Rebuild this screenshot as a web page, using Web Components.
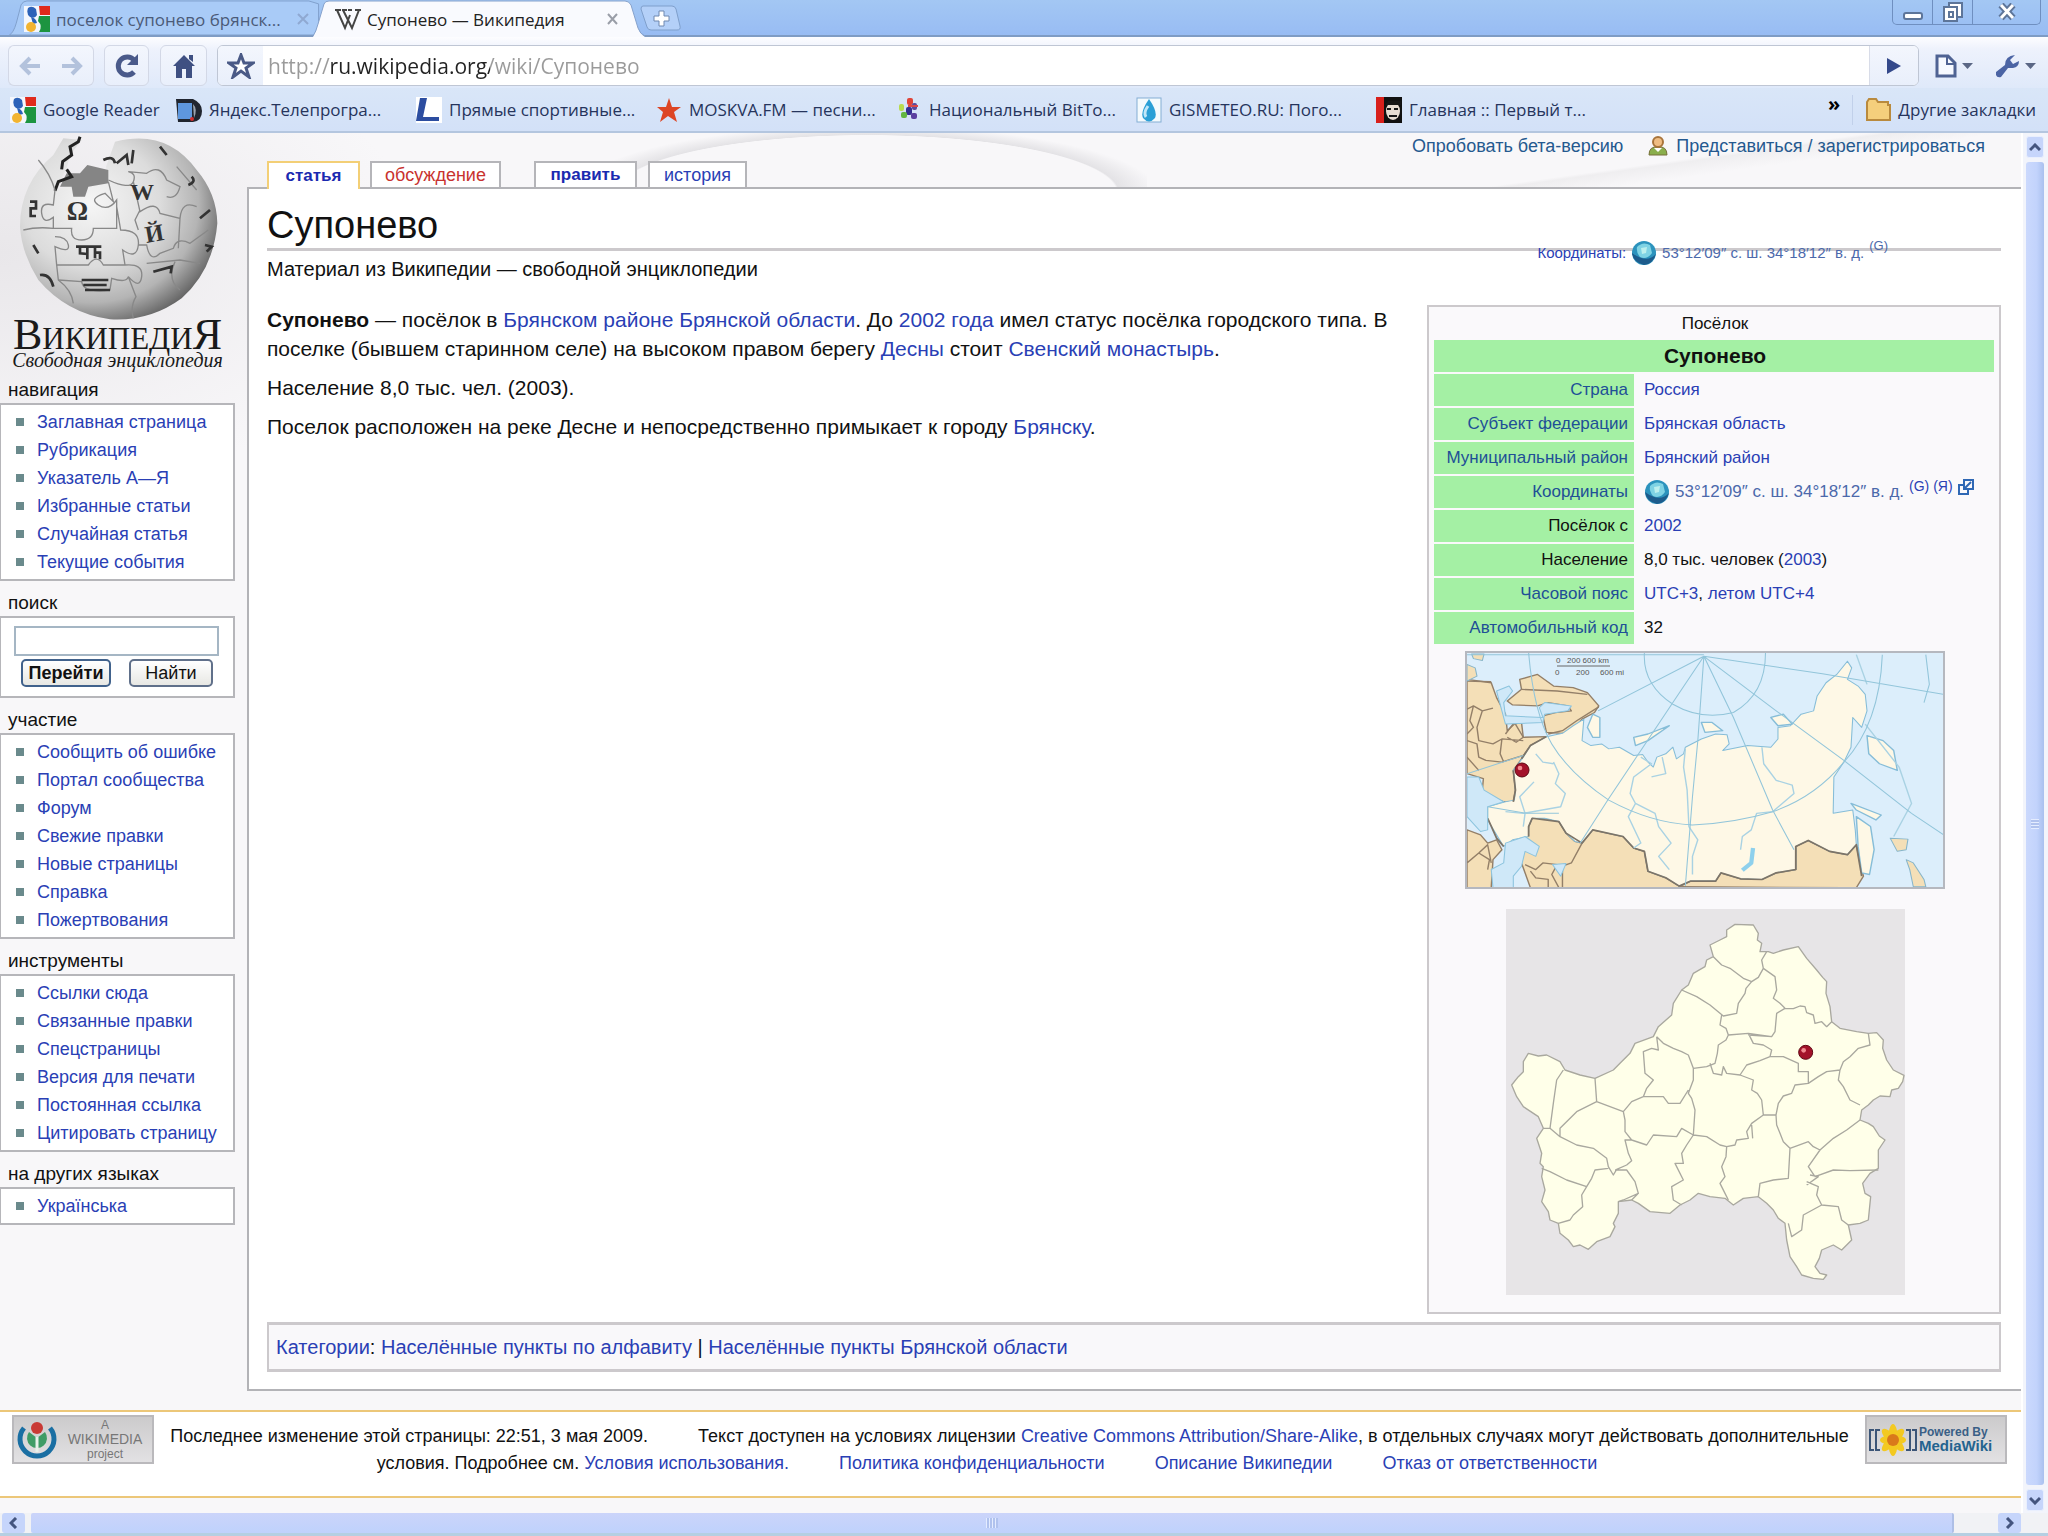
<!DOCTYPE html>
<html lang="ru">
<head>
<meta charset="utf-8">
<title>Супонево — Википедия</title>
<style>
html{background:#f8f7f9}
body{margin:0;font-family:"Liberation Sans",Arial,sans-serif;color:#111}
</style>
</head>
<body>
<browser-window>
  <tab-strip slot="chrome"></tab-strip>
  <address-bar slot="chrome"></address-bar>
  <bookmark-bar slot="chrome"></bookmark-bar>
  <wiki-page>
    <wiki-logo slot="side"></wiki-logo>
    <side-portlet slot="side" heading="навигация">
      <side-link>Заглавная страница</side-link><side-link>Рубрикация</side-link><side-link>Указатель А—Я</side-link><side-link>Избранные статьи</side-link><side-link>Случайная статья</side-link><side-link>Текущие события</side-link>
    </side-portlet>
    <wiki-search slot="side"></wiki-search>
    <side-portlet slot="side" heading="участие">
      <side-link>Сообщить об ошибке</side-link><side-link>Портал сообщества</side-link><side-link>Форум</side-link><side-link>Свежие правки</side-link><side-link>Новые страницы</side-link><side-link>Справка</side-link><side-link>Пожертвования</side-link>
    </side-portlet>
    <side-portlet slot="side" heading="инструменты">
      <side-link>Ссылки сюда</side-link><side-link>Связанные правки</side-link><side-link>Спецстраницы</side-link><side-link>Версия для печати</side-link><side-link>Постоянная ссылка</side-link><side-link>Цитировать страницу</side-link>
    </side-portlet>
    <side-portlet slot="side" heading="на других языках">
      <side-link>Українська</side-link>
    </side-portlet>
    <personal-links slot="top"></personal-links>
    <page-tabs slot="top"></page-tabs>
    <wiki-article></wiki-article>
    <wiki-footer slot="footer"></wiki-footer>
  </wiki-page>
</browser-window>

<script>
const BASE = `<style>*,:host{box-sizing:border-box}a{color:#2a3fb5;text-decoration:none}a:hover{text-decoration:underline}
button{font:inherit;color:inherit;border:0;background:none;padding:0;margin:0}svg{display:block;flex:none}:host([hidden]){display:none}</style>`;
const define = (name, html) => customElements.define(name, class extends HTMLElement {
  constructor() {
    super();
    const t = document.createElement('template');
    t.innerHTML = BASE + (typeof html === 'function' ? html(this) : html);
    this.attachShadow({mode: 'open'}).append(t.content.cloneNode(true));
  }
});

const googleIcon = `<svg width="26" height="26" viewBox="0 0 26 26"><rect width="26" height="26" fill="#f4f7fd"/><path d="M15 0H26V9H16Z" fill="#e02a1c"/><path d="M15 10H26V26H15Q19 20 14 15Z" fill="#1c9440"/><path d="M4 2Q8-1 12 3L13 9Q11 13 6 11Q2 8 4 2Z" fill="#2c62b8"/><path d="M7 11Q12 12 13 17L9 18Z" fill="#2c62b8"/><circle cx="7" cy="21" r="5" fill="#f2b431"/></svg>`;

define('browser-window', `<style>
:host{display:grid;grid-template-rows:auto 1fr auto;min-height:100vh}
header{display:block;border-bottom:2px solid #b4c6df}
.view{display:grid;grid-template-columns:1fr 27px}
</style>
<header><slot name="chrome"></slot></header>
<div class="view"><slot></slot><scroll-bar></scroll-bar></div>
<bottom-scroll></bottom-scroll>`);

define('scroll-bar', `<style>
:host{display:flex;flex-direction:column;background:#f2f4fb;padding:3px 4px 2px 3px;gap:4px;border-left:2px solid #fff}
button{height:22px;border-radius:3px;background:#c6d5fb;border:1px solid #e9effe;display:grid;place-items:center}
.thumb{flex:1;border-radius:3px;background:linear-gradient(90deg,#cbd9fd,#c2d3fc 60%,#a9c0ee);display:grid;place-items:center}
i{width:8px;height:10px;background:repeating-linear-gradient(#e4ecff 0 1px,#b0c2ee 1px 3px)}
</style><button aria-label="Вверх"><svg width="12" height="9" viewBox="0 0 12 9"><path d="M1 7L6 2L11 7" fill="none" stroke="#44557f" stroke-width="3"/></svg></button>
<div class="thumb"><i></i></div>
<button aria-label="Вниз"><svg width="12" height="9" viewBox="0 0 12 9"><path d="M1 2L6 7L11 2" fill="none" stroke="#44557f" stroke-width="3"/></svg></button>`);

define('bottom-scroll', `<style>
:host{display:flex;background:#f1f2f5;height:23px;padding:0 27px 0 2px;gap:6px;border-bottom:3px solid #b5cfe2}
button{width:23px;background:#c6d5fb;border-radius:3px;display:grid;place-items:center}
.thumb{flex:1;margin-right:38px;background:linear-gradient(#cbd4fa,#bfd2fc);border-right:2px solid #aebfe6;border-radius:2px;display:grid;place-items:center}
i{width:12px;height:10px;background:repeating-linear-gradient(90deg,#e4ecff 0 1px,#b0c2ee 1px 3px)}
</style><button aria-label="Влево"><svg width="9" height="12" viewBox="0 0 9 12"><path d="M7 1L2 6L7 11" fill="none" stroke="#44557f" stroke-width="3"/></svg></button>
<div class="thumb"><i></i></div>
<button aria-label="Вправо"><svg width="9" height="12" viewBox="0 0 9 12"><path d="M2 1L7 6L2 11" fill="none" stroke="#44557f" stroke-width="3"/></svg></button>`);

define('tab-strip', `<style>
:host{display:flex;height:37px;background:linear-gradient(#a3c7f3,#98bcf3);font-family:"Open Sans",sans-serif;font-size:17px;border-bottom:2px solid #7f9cc4}
.tab{display:grid;height:37px}
.tab>*{grid-area:1/1}
.row{display:flex;align-items:center;gap:6px;height:36px;padding:2px 0 0;white-space:nowrap}
.t1{width:312px;margin-left:5px;color:#4b5a78;height:35px}.t1 .row{padding-left:19px}
.t2{width:330px;margin-left:-4px;color:#222;z-index:1}.t2 .row{padding-left:22px}
.row button{margin-left:auto;width:18px}
.t1 button{margin-right:8px}.t2 button{margin-right:20px}
.plus{margin:5px 0 0 -3px;height:26px}
.win{display:flex;margin-left:auto;margin-right:7px;height:25px;border:1px solid #6f8fc0;border-top:0;border-radius:0 0 5px 5px}
.win button{display:grid;place-items:center;border-right:1px solid #6f8fc0;width:40px}
.win button:last-child{width:67px;border:0}
</style>
<div class="tab t1"><svg width="318" height="35" viewBox="0 0 318 36"><path d="M0 36Q4 34 7 24L12 5Q14 1 18 1H308L318 4V36Z" fill="#a9cbf7" stroke="#7f9fcb"/></svg>
<div class="row">${googleIcon}<span>поселок супонево брянск...</span><button aria-label="Закрыть вкладку"><svg width="12" height="12" viewBox="0 0 12 12"><path d="M1 1L11 11M11 1L1 11" stroke="#8fa9d2" stroke-width="2"/></svg></button></div></div>
<div class="tab t2"><svg width="332" height="37" viewBox="0 0 332 37"><path d="M0 37Q3 32 5 24L11 4Q12 1 16 1H312Q316 1 318 5L325 28Q327 34 332 37Z" fill="#f9fafe"/><path d="M0 36Q3 32 5 24L11 4Q12 1 16 1H312Q316 1 318 5L325 28Q327 34 332 36" fill="none" stroke="#86a2cc"/></svg>
<div class="row"><svg width="26" height="24" viewBox="0 0 26 24"><path d="M2 3L10 21L15 8M8 3L17 21L24 3M0 3H6M7 3H12M20 3H26M13 3H17" fill="none" stroke="#444" stroke-width="2"/></svg><span>Супонево — Википедия</span><button aria-label="Закрыть вкладку"><svg width="11" height="12" viewBox="0 0 11 12"><path d="M1 1L10 11M10 1L1 11" stroke="#9a9ea8" stroke-width="2"/></svg></button></div></div>
<button class="plus" aria-label="Новая вкладка"><svg width="42" height="26" viewBox="0 0 42 26"><path d="M3 1H32Q35 1 36 4L40 21Q41 25 37 25H11Q8 25 7 22L1 4Q1 1 3 1Z" fill="#b4d0f8" stroke="#7f9fcb"/><path d="M19 6H24V11H29V16H24V21H19V16H14V11H19Z" fill="#fff" stroke="#6e88b0"/></svg></button>
<div class="win"><button aria-label="Свернуть"><svg width="20" height="20" viewBox="0 0 20 20"><rect x="1" y="11" width="18" height="6" rx="2" fill="#fff" stroke="#5d7599" stroke-width="2"/></svg></button>
<button aria-label="Развернуть"><svg width="22" height="22" viewBox="0 0 22 22"><rect x="7" y="2" width="13" height="14" fill="#fff" stroke="#5d7599" stroke-width="2"/><rect x="2" y="6" width="13" height="14" fill="#fff" stroke="#5d7599" stroke-width="2"/><rect x="7" y="11" width="4" height="5" fill="none" stroke="#5d7599" stroke-width="2"/></svg></button>
<button aria-label="Закрыть"><svg width="18" height="18" viewBox="0 0 18 18"><path d="M3 2L15 15M15 2L3 15" stroke="#5d7599" stroke-width="7"/><path d="M3 2L15 15M15 2L3 15" stroke="#fff" stroke-width="3"/></svg></button></div>`);

define('address-bar', `<style>
:host{display:flex;align-items:flex-start;padding:8px 12px 0 8px;height:51px;background:linear-gradient(#fdfdff,#eef2fc 12px,#dfe9fa)}
button{height:41px;display:grid;place-items:center;border:1px solid #d3d8e6;border-radius:6px;background:linear-gradient(#f3f6fd,#e9effb)}
.nav{display:flex;margin-right:10px}
.nav button{width:43px;border-radius:6px 0 0 6px;border-right:0}.nav button+button{border-radius:0 6px 6px 0;border:1px solid #d3d8e6;border-left:0}
.re{width:45px;margin-right:11px}.ho{width:47px;margin-right:10px}
.box{flex:1;display:flex;border:1px solid #bfc6d4;border-radius:6px;height:41px;background:#fff;overflow:hidden}
.box button{height:39px;border:0;border-radius:0;width:45px}.box .go{width:49px;border-left:1px solid #d8dce8}
input{flex:1;min-width:0;border:0;outline:0;padding:0 5px;font:21px "Open Sans",sans-serif;background:linear-gradient(90deg,#9a9a9a 67px,#222 67px 227px,#9a9a9a 227px);-webkit-background-clip:text;background-clip:text;color:transparent}
.m{border:0;background:none;display:flex;align-items:center;gap:5px;margin-left:16px}.m+.m{margin-left:22px}
</style>
<div class="nav"><button aria-label="Назад"><svg width="22" height="20" viewBox="0 0 22 20"><path d="M21 10H3M11 2L3 10L11 18" fill="none" stroke="#b3c2dc" stroke-width="4"/></svg></button><button aria-label="Вперёд"><svg width="22" height="20" viewBox="0 0 22 20"><path d="M1 10H19M11 2L19 10L11 18" fill="none" stroke="#b3c2dc" stroke-width="4"/></svg></button></div>
<button class="re" aria-label="Обновить"><svg width="26" height="24" viewBox="0 0 26 24"><path d="M20 6A9 9 0 1 0 20 18" fill="none" stroke="#4a5a8a" stroke-width="5"/><path d="M24 0V11H13Z" fill="#4a5a8a"/></svg></button>
<button class="ho" aria-label="Домой"><svg width="24" height="24" viewBox="0 0 24 24"><path d="M12 1L23 12H20V24H14V15H10V24H4V12H1Z M17 1H21V8L17 5Z" fill="#3f5082"/></svg></button>
<div class="box"><button aria-label="Добавить в закладки"><svg width="28" height="26" viewBox="0 0 28 26"><path d="M14 2L17 10L26 10L19 15L22 24L14 18L6 24L9 15L2 10L11 10Z" fill="#fff" stroke="#4a5a86" stroke-width="3"/></svg></button><input aria-label="Адрес" value="http://ru.wikipedia.org/wiki/Супонево"><button class="go" aria-label="Перейти"><svg width="16" height="16" viewBox="0 0 16 16"><path d="M1 0L15 8L1 16Z" fill="#34498a"/></svg></button></div>
<button class="m" aria-label="Страница"><svg width="22" height="24" viewBox="0 0 22 24"><path d="M2 2H13L20 9V22H2Z" fill="#f6f9ff" stroke="#4f6393" stroke-width="3"/><path d="M12 2V10H20" fill="none" stroke="#4f6393" stroke-width="2"/></svg><svg width="11" height="6" viewBox="0 0 11 6"><path d="M0 0H11L5.500 6Z" fill="#5b6785"/></svg></button>
<button class="m" aria-label="Настройки"><svg width="25" height="24" viewBox="0 0 25 24"><path d="M20 1L15 6L18 10L24 7Q24 13 18 14L13 14L6 23Q2 24 1 21L1 18L10 11Q10 2 20 1Z" fill="#4b64a4"/></svg><svg width="11" height="6" viewBox="0 0 11 6"><path d="M0 0H11L5.500 6Z" fill="#5b6785"/></svg></button>`);

define('book-mark', `<style>
:host{display:block;flex:0 1 240px;min-width:0}:host(.first){flex-basis:166px}:host(.last){flex:none}
a{display:flex;align-items:center;gap:7px;color:#26345c;white-space:nowrap}
</style><a href="#"><slot name="icon"></slot><span><slot></slot></span></a>`);

define('bookmark-bar', `<style>
:host{display:flex;align-items:center;height:43px;padding:0 12px 0 10px;background:linear-gradient(#d9e6f8,#d3e1f8);font-family:"Open Sans",sans-serif;font-size:17px}
.more{margin:0 12px 12px auto;font-weight:700;font-size:20px;line-height:20px;color:#000}
.sep{width:1px;height:30px;background:#c1d0ea;margin-right:12px}
svg{width:26px;height:26px}
</style>
<book-mark class="first"><span slot="icon">${googleIcon}</span>Google Reader</book-mark>
<book-mark><svg slot="icon" viewBox="0 0 26 26"><path d="M0 2H17Q26 6 26 14Q26 24 17 25H2Z" fill="#20252f"/><rect x="2" y="6" width="14" height="16" fill="#5e97de"/><path d="M17 7Q22 12 18 21Z" fill="#9aa4b0"/><circle cx="16" cy="22" r="2" fill="#d03030"/></svg>Яндекс.Телепрогра...</book-mark>
<book-mark><svg slot="icon" viewBox="0 0 26 26"><rect width="26" height="26" fill="#fff"/><path d="M4 1H11L7 20H23V24H0Z" fill="#2c4da0"/></svg>Прямые спортивные...</book-mark>
<book-mark><svg slot="icon" viewBox="0 0 26 26"><path d="M13 1L16 10H25L18 15L21 25L12 19L4 25L7 15L1 10H10Z" fill="#dd4524"/></svg>MOSKVA.FM — песни...</book-mark>
<book-mark><svg slot="icon" viewBox="0 0 26 26"><rect x="11" y="1" width="6" height="7" rx="2" fill="#e04438"/><rect x="3" y="7" width="5" height="7" rx="2" fill="#b8db4e"/><rect x="16" y="6" width="5" height="7" rx="2" fill="#5a4a9c"/><rect x="10" y="10" width="6" height="8" rx="2" fill="#353091"/><rect x="5" y="15" width="6" height="6" rx="2" fill="#63b741"/><rect x="15" y="16" width="6" height="6" rx="2" fill="#5b3fa0"/><path d="M12 9H22" stroke="#d8474a" stroke-width="2"/></svg>Национальный BitTo...</book-mark>
<book-mark><svg slot="icon" viewBox="0 0 26 26"><rect x="1" y="1" width="24" height="24" fill="#f4fafd" stroke="#84aed3"/><path d="M13 2Q22 15 19 21Q13 28 7 21Q4 15 13 2Z" fill="#2a9fd6"/><path d="M12 9Q7 16 10 20" fill="none" stroke="#bfe6f8" stroke-width="3"/></svg>GISMETEO.RU: Пого...</book-mark>
<book-mark><svg slot="icon" viewBox="0 0 26 26"><rect width="26" height="26" fill="#111"/><rect width="8" height="26" fill="#d8201c"/><ellipse cx="17" cy="14" rx="7" ry="9" fill="#e6dcd2"/><path d="M9 8H25V4H12ZM11 11H15V13H11ZM18 11H22V13H18ZM13 18H21V20H13Z" fill="#161616"/></svg>Главная :: Первый т...</book-mark>
<button class="more" aria-label="Другие закладки панели">»</button><i class="sep"></i>
<book-mark class="last"><svg slot="icon" viewBox="0 0 26 26"><path d="M2 5L4 2H11L13 5H23V8H25V23H2Z" fill="#f5cf7c" stroke="#b98a3e" stroke-width="2"/></svg>Другие закладки</book-mark>`);

define('wiki-page', `<style>
:host{display:grid;grid-template-columns:247px minmax(0,1fr);grid-template-rows:1fr auto;align-content:start;background:radial-gradient(ellipse 420px 240px at 0 120px,#e9e7ea,transparent),#f8f7f9}
.main{background:radial-gradient(ellipse 260px 60px at 620px 60px,transparent 96%,#e4e3e6 97%,transparent 112%) 0 0/900px 56px no-repeat,linear-gradient(172deg,transparent 50%,#efeef0 52%,transparent 62%) 100% 0/700px 56px no-repeat}
footer{grid-column:1/3}
</style><nav><slot name="side"></slot></nav><main class="main"><slot name="top"></slot><slot></slot></main><footer><slot name="footer"></slot></footer>`);

define('wiki-logo', `<style>
:host{display:flex;flex-direction:column;align-items:center;width:235px;height:235px;padding-top:2px;font-family:"Liberation Serif",serif;color:#1a1a1a}
svg{width:205px;height:185px}.n{font-size:44px;line-height:30px;font-variant:small-caps}.s{font-style:italic;font-size:20px;line-height:20px;white-space:nowrap}
text{font-family:"Liberation Serif",serif;font-weight:700;fill:#333}
</style>
<svg viewBox="45 15 615 555"><defs><radialGradient id="g" cx=".36" cy=".36" r=".7"><stop offset="0" stop-color="#f6f6f6"/><stop offset=".5" stop-color="#dcdcdc"/><stop offset=".78" stop-color="#b4b4b4"/><stop offset="1" stop-color="#626262"/></radialGradient></defs>
<path d="M60 290Q60 160 160 75L190 25L245 30L210 75L200 115L165 180L215 165L220 195L262 190L265 172L325 155L318 110L345 35Q500 -5 590 120Q650 190 652 280Q640 420 545 505Q450 575 330 568Q200 550 115 450Q65 370 60 290Z" fill="url(#g)"/>
<path d="M200 130H240L262 105L325 120V160L265 170L255 200H220L215 170H180Z" fill="#858585"/>
<path d="M240 20L235 35L210 50L215 75L188 95L185 118M200 118L215 140L175 155L165 182" fill="none" stroke="#222" stroke-width="9"/>
<path d="M310 90Q340 75 345 100M350 100L380 75L385 105M400 60L395 100M480 50L500 75" fill="none" stroke="#333" stroke-width="8"/>
<g fill="none" stroke="#888" stroke-width="4"><path d="M115 90Q150 130 165 180L160 225Q120 215 125 250T160 262V295Q110 290 70 300M160 295H215Q210 330 245 330T280 295H350V210Q325 245 295 225T315 190L340 215L325 155M350 230L362 300Q420 300 415 345T368 360L375 405H310Q290 370 265 405H170L165 350Q210 370 205 345T165 320M375 405Q430 400 425 440T385 440L408 500Q390 530 400 565M170 405L175 450Q215 480 220 520M325 150Q390 180 400 155T385 125L440 130Q480 100 500 150L540 170Q530 210 500 200M400 155L420 245Q470 210 480 250L540 265Q545 210 590 230M415 300L405 270L420 240M415 345H440Q450 400 480 370L520 355Q530 320 570 340L625 300M440 400L540 390L600 400M540 265L535 355M525 395Q500 450 540 480M530 110L590 180"/><path d="M175 450L245 455Q250 490 330 480L335 445Q380 460 385 440"/></g>
<text x="200" y="270" font-size="80">Ω</text><text x="390" y="210" font-size="72">W</text><text x="435" y="335" font-size="72" transform="rotate(-10 460 310)">Й</text>
<g fill="none" stroke="#333" stroke-width="8"><path d="M228 350H304M240 350V370L262 372M262 350V388M285 350V385M285 368H300V388"/><path d="M245 450H325M250 465H320M255 480H330M460 425L515 410L512 430M575 140Q590 155 565 165M90 215H108V235H92V258H108M100 345L115 370M120 435Q150 430 160 470M630 240L600 265M615 345L635 350L620 365"/></g></svg>
<span class="n">ВикипедиЯ</span><span class="s">Свободная энциклопедия</span>`);

const portletCss = `:host{display:block;width:235px}h2,label.h{display:block;margin:0;padding:9px 0 0 8px;font-size:19px;font-weight:400;line-height:26px;color:#111}
.b{border:2px solid #b6b6ba;border-left-width:1px;background:#fff;padding:3px 0}`;
define('side-portlet', el => `<style>${portletCss}</style><h2>${el.getAttribute('heading')}</h2><div class="b" role="list"><slot></slot></div>`);
define('side-link', `<style>:host{display:flex;align-items:center;gap:13px;padding-left:15px;height:28px;font-size:18px;line-height:28px;white-space:nowrap}
:host::before{content:"";width:8px;height:8px;background:#6a8a8c;flex:none}</style><a href="#"><slot></slot></a>`);
define('wiki-search', `<style>${portletCss}
.b{height:82px;padding:8px 14px 0 13px}
input{display:block;width:205px;height:30px;border:2px solid #a5b6c4;background:#fff;margin-bottom:3px}
div div{display:flex;gap:18px;padding-left:7px}
button{height:28px;width:90px;border:2px solid #60708a;border-radius:5px;background:linear-gradient(#fff,#e8e8e4);font-size:18px;line-height:24px}
button:first-child{font-weight:700;border-color:#41628c}button+button{width:84px}
</style><label class="h" for="q">поиск</label><div class="b"><input id="q" type="text"><div><button>Перейти</button><button>Найти</button></div></div>`);

define('personal-links', `<style>:host{display:flex;justify-content:flex-end;align-items:center;height:28px;padding:0 36px 2px 0;font-size:18px;gap:8px}
a{color:#25598f}a:first-of-type{margin-right:17px}</style>
<a href="#">Опробовать бета-версию</a><svg width="20" height="20" viewBox="0 0 20 20"><path d="M1 19Q1 10 10 11Q19 10 19 19Z" fill="#8aae4c" stroke="#77703a"/><path d="M6 12L10 16L14 12Z" fill="#fff"/><circle cx="10" cy="6" r="5" fill="#f0bd83" stroke="#a9743b" stroke-width="2"/></svg><a href="#">Представиться / зарегистрироваться</a>`);

define('page-tabs', `<style>:host{display:flex;height:26px;padding-left:20px;font-size:18px}
a{border:2px solid #b5b5b9;border-bottom:0;background:#fff;display:grid;place-items:center;height:26px;line-height:20px;width:131px;margin-right:11px}
a.on,a.ed{font-size:17px;font-weight:700;color:#1a2ab0}
a.on{width:93px;border-color:#f3cf76;height:28px;z-index:1;margin-right:10px}a.red{color:#c8322e}a.ed{width:103px;margin-left:22px}a.hi{width:99px}
</style><a class="on" href="#">статья</a><a class="red" href="#">обсуждение</a><a class="ed" href="#">править</a><a class="hi" href="#">история</a>`);

const globe = s => `<svg width="${s}" height="${s}" viewBox="0 0 26 26"><circle cx="13" cy="13" r="12" fill="#2c93bd"/><path d="M1 13Q2 22 13 25Q22 24 25 14Q16 24 1 13Z" fill="#1d5c8c"/><path d="M6 7Q12 1 19 5L21 13Q16 20 9 17Q5 12 6 7Z" fill="#7fd3e4"/><path d="M10 8L16 7L15 13L11 14Z" fill="#bdf0ee"/></svg>`;

define('geo-line', `<style>:host{position:absolute;right:133px;top:51px;display:flex;align-items:center;gap:5px;font-size:15px;line-height:26px;white-space:nowrap}
sup{font-size:13px;line-height:12px;align-self:flex-start}.c{color:#4c69ab}</style><a href="#">Координаты:</a>${globe(26)}<a class="c" href="#">53°12′09″ с. ш. 34°18′12″ в. д.</a><sup><a class="c" href="#">(G)</a></sup>`);

define('wiki-article', `<style>
:host{display:block;position:relative;background:#fff;border:2px solid #b3b3b7;border-right:0;padding:0 20px 17px 18px}
h1{font-size:38px;font-weight:400;line-height:46px;margin:0;padding-top:13px;border-bottom:3px solid #ccc9cc}
.sub{font-size:20px;line-height:26px;margin:5px 0 23px}
.cols{display:flex;gap:30px;align-items:flex-start;margin-bottom:8px}
.text{flex:1;min-width:0;font-size:21px;line-height:29px}p{margin:0 0 10px}
.cats{border:2px solid #ccc9cc;border-width:3px 2px;background:#f9f8fa;height:50px;line-height:44px;padding-left:7px;font-size:20px}
</style>
<h1>Супонево</h1><geo-line></geo-line>
<div class="sub">Материал из Википедии — свободной энциклопедии</div>
<div class="cols"><div class="text">
<p><b>Супонево</b> — посёлок в <a href="#">Брянском районе</a> <a href="#">Брянской области</a>. До <a href="#">2002 года</a> имел статус посёлка городского типа. В <span>поселке (бывшем старинном селе) на высоком правом берегу </span><a href="#">Десны</a> стоит <a href="#">Свенский монастырь</a>.</p>
<p>Население 8,0 тыс. чел. (2003).</p>
<p>Поселок расположен на реке Десне и непосредственно примыкает к городу <a href="#">Брянску</a>.</p></div>
<info-box></info-box></div>
<div class="cats"><a href="#">Категории</a>: <a href="#">Населённые пункты по алфавиту</a> | <a href="#">Населённые пункты Брянской области</a></div>`);

define('info-box', `<style>
:host{display:block;flex:none;width:574px;border:2px solid #ccc9cc;background:#faf9fb;padding:1px 3px 17px;font-size:17px}
table{width:100%;border-spacing:2px;table-layout:fixed}td,th{padding:0 6px 0 8px;height:32px;font-weight:400;text-align:left;white-space:nowrap}
th.k{height:28px;text-align:center}th.t{background:#a4f0a4;font-weight:700;font-size:21px;line-height:24px;text-align:center}
tbody th{background:#a4f0a4;text-align:right;width:200px}tbody th a{color:#204f96}
.geo{display:flex;align-items:center;gap:5px}sup{font-size:14px;line-height:14px;align-self:flex-start}.c{color:#4c69ab}
.geo svg:last-child{align-self:flex-start}
.maps{padding-right:18px}
russia-map{margin:5px auto 0}oblast-map{margin:20px auto 0}
</style>
<table><colgroup><col style="width:200px"><col></colgroup><thead><tr><th class="k" colspan="2">Посёлок</th></tr><tr><th class="t" colspan="2">Супонево</th></tr></thead><tbody>
<tr><th><a href="#">Страна</a></th><td><a href="#">Россия</a></td></tr>
<tr><th><a href="#">Субъект федерации</a></th><td><a href="#">Брянская область</a></td></tr>
<tr><th><a href="#">Муниципальный район</a></th><td><a href="#">Брянский район</a></td></tr>
<tr><th><a href="#">Координаты</a></th><td><div class="geo">${globe(26)}<a class="c" href="#">53°12′09″ с. ш. 34°18′12″ в. д.</a><sup><a href="#">(G)</a> <a href="#">(Я)</a></sup><svg width="16" height="16" viewBox="0 0 16 16"><path d="M6 1H15V10H6ZM5 6H1V15H10V11M13 3L7 9" fill="none" stroke="#2f68b4" stroke-width="2"/></svg></div></td></tr>
<tr><th>Посёлок с</th><td><a href="#">2002</a></td></tr>
<tr><th>Население</th><td>8,0 тыс. человек (<a href="#">2003</a>)</td></tr>
<tr><th><a href="#">Часовой пояс</a></th><td><a href="#">UTC+3</a>, <a href="#">летом UTC+4</a></td></tr>
<tr><th><a href="#">Автомобильный код</a></th><td>32</td></tr></tbody></table>
<div class="maps"><russia-map></russia-map><oblast-map></oblast-map></div>`);

const pin = (x, y, r) => `<circle cx="${x}" cy="${y}" r="${r}" fill="#a3122a" stroke="#5f0714" stroke-width="1"/><circle cx="${x - 2}" cy="${y - 2}" r="${r / 3}" fill="#f08a90"/>`;

define('russia-map', `<style>:host{display:block;width:480px;border:2px solid #b5b8bf}svg{width:100%;height:auto}</style>
<svg viewBox="0 0 476 234" role="img" aria-label="Карта России"><rect width="476" height="234" fill="#dceefb"/>
<g transform="scale(.3562 .3306) translate(-132 -65)" stroke-linejoin="round">
<g fill="#f4dfb7" stroke="#937f68" stroke-width="4">
<path d="M132 145L200 155L215 200L240 250L245 300L265 280L285 275L290 320L355 318L310 345L285 385L262 420L268 480L262 515L235 515L200 500L175 480L178 445L132 430Z"/>
<path d="M245 210L285 175L280 145L330 130L375 165L430 170L470 185L502 225L490 245L455 265L430 295L400 308L355 305L345 255L380 245L425 240L415 225L360 215L330 225L260 222Z"/>
<path d="M132 150L200 152M132 235L150 225L175 240L205 232M175 240L160 290L165 330L205 340L230 325L290 330M132 330L160 340L165 380L185 390L230 395L245 390L290 375M230 325L225 370L235 395M132 380L165 420M150 225L140 270L150 290L132 310M240 310L265 275L290 320L270 335L245 320M285 175L385 180L470 190M360 310L400 300L440 270L502 228" fill="none"/>
<path d="M132 600L170 615L190 640L215 630L230 660L205 690L200 775H132ZM132 700L165 670L195 690L190 720M165 670L190 645L200 700"/>
<path d="M305 590L315 565L350 565L390 575L410 610L435 635L455 640L485 600L570 620L600 655L630 665L640 725L690 745L728 770V775H310L285 700L295 640Z"/>
<path d="M455 640L425 700L400 710L400 775M295 705L325 720L345 700L385 705L370 735L390 775M310 725L325 745L360 750V775" fill="none"/>
<path d="M728 772L760 755L830 755L845 730L900 748L960 750L1000 730L1055 720L1055 650L1090 632L1150 665L1200 675L1225 645L1235 700L1245 740L1225 775Z"/>
</g>
<g fill="#f4dfb7" stroke="#87b5c9" stroke-width="3"><path d="M1320 625L1370 628L1365 660L1340 665ZM1365 690L1385 700L1415 750L1420 772L1385 772L1375 720ZM132 100L155 110L160 135L132 150ZM145 68L180 68L175 88L150 82Z"/></g>
<path d="M355 318L400 308L430 285L460 265L455 330L480 345L510 340L530 355L560 350L600 375L625 372L640 395L655 410L665 380L690 370L710 350L720 385L740 370L745 350L790 325L830 310L862 312L868 340L850 360L920 345L985 350L1005 325L1005 290L1040 285L1070 250L1105 240L1115 195L1140 155L1170 130L1200 90L1212 110L1200 145L1230 165L1250 190L1255 240L1240 290L1215 260L1210 350L1190 395L1162 440L1160 550L1215 540L1222 600L1225 645L1200 675L1150 665L1090 632L1055 650L1055 720L1000 730L960 750L900 748L845 730L830 755L760 755L728 770L690 745L640 725L630 665L600 655L570 620L485 600L455 640L435 635L410 610L390 575L350 565L315 565L305 590L305 620L260 630L235 650L190 570L190 530L240 515L265 510L268 480L262 420L290 380L310 345Z" fill="#fef8e6" stroke="#86bdd8" stroke-width="3"/>
<g fill="#fef8e6" stroke="#86bdd8" stroke-width="4"><path d="M1255 315L1300 330L1330 360L1340 420L1290 400L1260 370ZM1225 560L1265 590L1275 660L1262 735L1240 730L1230 650ZM485 250L505 260L505 320L485 320L470 290ZM600 320L640 310L700 285L640 330L605 345ZM790 275L820 275L850 300L800 305ZM985 260L1020 250L1045 280L1005 285ZM1210 520L1295 555L1280 570L1225 540Z"/></g>
<path d="M190 565L215 625L235 650M355 318L310 345L285 385M262 420L268 480L262 515M305 620L305 590L315 565L390 575L410 610L455 640L485 600L570 620L600 655L630 665L640 725L690 745L728 770L760 755L830 755L845 730L900 748L960 750L1000 730L1055 720L1055 650L1090 632L1150 665L1200 675L1225 645L1240 740" fill="none" stroke="#7d7467" stroke-width="5"/>
<path d="M132 440L165 440L180 480L235 515L190 530L190 600L170 605L132 560ZM240 640L295 620L335 650L325 680L295 665L285 710L262 740V775H205L200 720L235 700ZM372 705L410 702L395 740ZM240 255L345 260L335 230L350 215L425 225L415 240L350 250L345 275L240 280L215 180L250 165L260 180L235 215Z" fill="#cfe8f8" stroke="#8cc4de" stroke-width="3"/>
<g fill="none" stroke="#a9d2e3" stroke-width="4"><path d="M375 395L390 430L380 460L408 490L395 530L290 550L240 545M290 590L295 550L280 500L320 455M325 370L345 395L375 400M620 380L650 400L600 440L590 490L605 520L585 560L620 640L600 655M605 520L660 550L670 590L705 640L670 680L700 720M745 355L740 410L750 480L755 590L780 630L765 680V735M960 350L965 400L1000 450L1045 465L1050 490L990 545L945 550L930 600L905 620L900 660M650 440L690 430L680 380M1225 70L1255 160M1250 280L1345 410L1380 520L1330 620"/><path d="M935 655L930 700L905 722" stroke="#8ed0ec" stroke-width="12"/></g>
<g fill="none" stroke="#92c5da" stroke-width="3"><path d="M132 70H797M797 75L500 240M797 75L710 215L530 505L450 640M797 75L780 330L765 500L745 770M797 75L880 260L990 540L1050 660M797 75L1000 240L1190 390L1380 550L1470 615M797 75L1130 128L1470 190M630 65Q625 160 710 220Q790 270 880 245Q970 190 970 65M305 65Q320 250 370 340Q420 430 530 510Q650 580 765 585Q880 580 990 545Q1110 500 1190 395Q1290 280 1298 70M1420 70L1430 160L1415 215M132 430L290 375M190 530L300 550H390"/></g></g>
<path d="M90 13H143" stroke="#666"/>
<g font-family="Liberation Sans" font-size="8" fill="#555"><text x="89" y="10">0</text><text x="100" y="10">200 600 km</text><text x="88" y="22">0</text><text x="109" y="22">200</text><text x="133" y="22">600 mi</text></g>
${pin(55, 117, 7)}</svg>`);

define('oblast-map', `<style>:host{display:block;width:399px}svg{width:100%;height:auto}</style>
<svg viewBox="78 57 1197 1158" role="img" aria-label="Карта Брянской области"><rect x="78" y="57" width="1197" height="1158" fill="#e7e5e7"/>
<g fill="#ffffe9" stroke="#a9a89f" stroke-width="4" stroke-linejoin="round">
<path d="M740 120L765 103L820 105L835 130L832 150L845 160L840 185L865 185L880 190L910 180L955 170L980 205L1010 240L1028 262L1040 275L1038 310L1050 350L1055 395L1080 415L1130 425L1165 430L1190 428L1210 450L1208 475L1220 510L1240 540L1272 556L1268 575L1255 595L1235 600L1230 620L1200 618L1180 630L1165 645L1145 660L1140 690L1165 700L1180 710L1198 738L1215 750L1195 780L1195 835L1170 850L1148 880L1155 910L1172 920L1165 990L1140 1000L1105 1005L1115 1050L1085 1080L1060 1065L1025 1080L1018 1105L1005 1130L1020 1150L1040 1155L1030 1168L1000 1165L965 1155L950 1130L930 1100L920 1050L915 1000L895 985L880 960L860 940L835 920L790 925L760 945L735 925L690 920L655 910L630 930L600 945L570 970L510 965L475 940L455 930L415 935L415 970L400 1000L405 1010L390 1040L350 1055L325 1078L300 1065L280 1070L265 1050L240 1030L235 1000L210 990L205 965L185 935L195 900L185 860L190 830L180 820L185 790L170 745L190 715L175 680L130 650L110 620L95 585L115 560L130 545L130 515L145 490L175 498L200 495L240 515L255 540L300 555L345 565L400 540L420 520L450 490L465 460L520 440L535 410L575 375L580 340L605 300L625 285L640 250L675 230L680 210L700 200L690 165L720 150L740 140Z"/>
<g fill="none"><path d="M700 200L725 225L750 235L790 265L815 275L835 262L850 235L845 210L860 185M815 275L798 295L795 310L775 340L770 370L730 378L690 345L650 320L605 300M850 235L885 260L890 300L880 325L900 340L915 355L940 356L960 348L975 350L980 368L1000 375L1005 400L1025 395L1040 410L1055 395M915 355L890 370L885 425L875 440L805 430L745 435L738 415L720 405L725 375M745 435L738 450L715 465L712 490L705 520L680 530L640 535L625 495L605 485L580 475L550 460L530 440M805 430L820 460L850 465L875 480L870 500L840 512L800 525L780 555L740 550L730 530L725 555L700 550L690 520M875 440L805 435M870 500L910 500L955 520L955 545L985 545V580L945 585L935 610L910 618L895 640L888 675L850 675L845 630L832 610L815 600L820 570L780 555M985 580L1015 560L1040 545L1080 540L1090 515L1110 500L1135 475L1170 465L1165 430M1080 540L1075 570L1090 590L1110 630L1140 645M1140 690L1100 720L1060 745L1020 780L1000 770L985 755L930 775L910 755L900 730L890 705L888 675M850 675L815 700L800 725L805 745L770 750L765 765L740 770L720 765L680 740L640 735L645 660L635 625L625 610L640 570L640 535M815 705L818 745M640 735L605 715L590 740L520 735L500 765L455 750L435 725L435 690L430 665L455 635L490 620L500 595L520 570L495 550L490 485L515 475L535 480L530 440M490 620L550 620L565 640L600 640L625 600M345 565L350 635L430 665M350 635L290 665L240 715L240 740L210 715L190 715M210 715L220 640L230 570L250 540M240 740L290 765L340 775L380 805L385 830L400 855L410 838L440 825L455 812L445 790L435 750L455 750M385 835L345 840L335 865L320 890L260 870L210 845L185 835M320 890L305 915L308 950L280 975L270 990L235 1000M405 840L440 840L465 875L475 910L430 930L415 935M475 910L455 930M640 735L620 765L605 790L610 820L585 820L610 870L575 890L580 930L605 945M740 770L738 800L725 830L735 860L720 880L735 910L745 930M930 775L925 865L880 870L840 880L835 920M1020 780L985 830L1005 860L1060 840L1110 842L1195 840M980 885L1015 860L990 855M980 875L1015 890L1010 915L1025 945L970 975L965 1020L935 1040L925 1000M1025 945L1075 950L1085 990L1105 1005"/></g></g>
<g transform="translate(977 487) scale(3)">${pin(0, 0, 7)}</g></svg>`);

define('wiki-footer', `<style>
:host{display:flex;justify-content:space-between;align-items:flex-start;margin:19px 0 15px;border-top:2px solid #ecc779;border-bottom:2px solid #ecc779;background:#fff;height:88px;padding:3px 14px 0 12px}
ul{flex:1;list-style:none;margin:8px 6px 0;padding:0;text-align:center;font-size:18px;line-height:27px}li{display:inline;margin-right:45px}
.bd{display:flex;align-items:center;width:142px;height:49px;background:linear-gradient(#cccbcc,#e2e1e3);border:2px solid #bab9bc;color:#777}
.bd span{flex:1;text-align:center;font-size:12px;line-height:14px;white-space:nowrap}
.bd .w{font-size:14px}.mw{color:#3a5f86;font-weight:700}.bd.mw span{text-align:left}.mw b{font-size:15px;color:#24638f}
</style>
<a class="bd" href="#"><svg width="44" height="44" viewBox="0 0 44 44"><path d="M10 10A17 17 0 1 0 36 10" fill="none" stroke="#1a6fa3" stroke-width="5"/><path d="M15 14A10 10 0 1 0 31 14L23 20Z" fill="#3f9c66"/><path d="M23 19V34" stroke="#e6f1ea" stroke-width="3"/><circle cx="23" cy="10" r="6" fill="#c93a35"/></svg><span>A<br><span class="w">WIKIMEDIA</span><br>project</span></a>
<ul><li>Последнее изменение этой страницы: 22:51, 3 мая 2009.</li> <li>Текст доступен на условиях лицензии <a href="#">Creative Commons Attribution/Share-Alike</a>, в отдельных случаях могут действовать дополнительные <span>условия. Подробнее см. </span><a href="#">Условия использования.</a></li> <li><a href="#">Политика конфиденциальности</a></li> <li><a href="#">Описание Википедии</a></li> <li><a href="#">Отказ от ответственности</a></li></ul>
<a class="bd mw" href="#"><svg width="52" height="40" viewBox="0 0 52 40"><path d="M7 10H3V30H7M13 10H9V30H13M39 10H43V30H39M45 10H49V30H45" fill="none" stroke="#3c5577" stroke-width="2"/><g fill="#f3c921"><ellipse cx="26" cy="20" rx="5" ry="16"/><ellipse cx="26" cy="20" rx="5" ry="15" transform="rotate(45 26 20)"/><ellipse cx="26" cy="20" rx="5" ry="13" transform="rotate(90 26 20)"/><ellipse cx="26" cy="20" rx="5" ry="15" transform="rotate(135 26 20)"/></g><circle cx="26" cy="20" r="6" fill="#d9791b"/></svg><span>Powered By<br><b>MediaWiki</b></span></a>`);
</script>
</body>
</html>
